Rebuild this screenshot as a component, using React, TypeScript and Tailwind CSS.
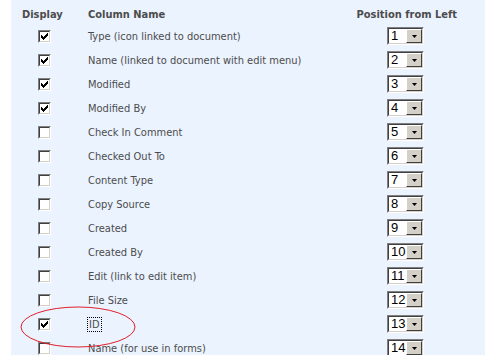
import React from "react";

const columns: { name: string; checked: boolean; focus?: boolean }[] = [
  { name: "Type (icon linked to document)", checked: true },
  { name: "Name (linked to document with edit menu)", checked: true },
  { name: "Modified", checked: true },
  { name: "Modified By", checked: true },
  { name: "Check In Comment", checked: false },
  { name: "Checked Out To", checked: false },
  { name: "Content Type", checked: false },
  { name: "Copy Source", checked: false },
  { name: "Created", checked: false },
  { name: "Created By", checked: false },
  { name: "Edit (link to edit item)", checked: false },
  { name: "File Size", checked: false },
  { name: "ID", checked: true, focus: true },
  { name: "Name (for use in forms)", checked: false },
];

function CheckBox({ checked }: { checked: boolean }) {
  return (
    <div className="w-[13px] h-[13px] border border-t-[#808080] border-l-[#808080] border-b-white border-r-white">
      <div className="w-full h-full border border-t-[#404040] border-l-[#404040] border-b-[#d4d0c8] border-r-[#d4d0c8] bg-white flex items-center justify-center">
        {checked && (
          <svg width="7" height="7" viewBox="0 0 7 7">
            <path d="M0 2h1v1h1v1h1V3h1V2h1V1h1V0h1v3H6v1H5v1H4v1H3v1H2V6H1V5H0z" fill="#000" />
          </svg>
        )}
      </div>
    </div>
  );
}

function PositionSelect({ value }: { value: number }) {
  return (
    <div className="w-[37px] h-[18px] border border-t-[#808080] border-l-[#808080] border-b-white border-r-white">
      <div className="w-full h-full flex border border-t-[#404040] border-l-[#404040] border-b-[#d4d0c8] border-r-[#d4d0c8] bg-white">
        <div className="flex-1 pl-[2px] text-[13px] leading-[14px] text-black font-['Liberation_Sans',sans-serif]">
          {value}
        </div>
        <div className="w-[16px] h-full bg-[#d4d0c8] border border-t-white border-l-white border-b-[#404040] border-r-[#404040] flex items-center justify-center">
          <svg width="5" height="3" viewBox="0 0 5 3">
            <path d="M0 0h5L2.5 3z" fill="#000" />
          </svg>
        </div>
      </div>
    </div>
  );
}

export default function App() {
  return (
    <div className="w-[504px] h-[355px] bg-white overflow-hidden font-['DejaVu_Sans_Condensed','Liberation_Sans',sans-serif] text-[11px] text-[#4c4c4c]">
      <div className="relative ml-[11px] w-[474px] h-full bg-[#ebf3ff]">
        <div className="flex h-[24px] pt-[8px] leading-[13px] font-bold text-[#4c4c4c]">
          <div className="w-[77px] pl-[11px]">Display</div>
          <div className="flex-1">Column Name</div>
          <div className="w-[170px] pr-[28px] text-right">Position from Left</div>
        </div>
        {columns.map((col, i) => (
          <div key={col.name} className="flex items-center h-[24px]">
            <div className="w-[77px] pl-[27px]">
              <CheckBox checked={col.checked} />
            </div>
            <div className="flex-1 leading-[13px]">
              {col.focus ? (
                <span className="outline outline-1 outline-dotted outline-black px-[1px]">{col.name}</span>
              ) : (
                col.name
              )}
            </div>
            <div className="w-[98px] pr-[61px]">
              <PositionSelect value={i + 1} />
            </div>
          </div>
        ))}
        <svg className="absolute left-[9px] top-[306px]" width="116" height="42" viewBox="0 0 116 42">
          <ellipse cx="58" cy="21" rx="57" ry="20" fill="none" stroke="#e0202a" strokeWidth="1" />
        </svg>
      </div>
    </div>
  );
}
